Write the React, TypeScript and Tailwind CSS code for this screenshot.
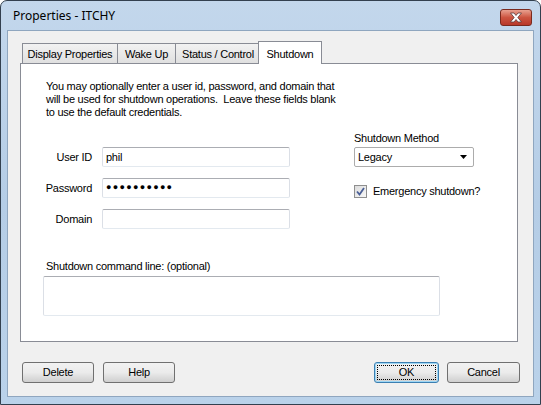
import React from 'react';

const ui = { fontFamily: '"Liberation Sans", Arial, sans-serif' };

function Tab({ label, width, active }: { label: string; width: string; active?: boolean }) {
  if (active) {
    return (
      <div
        className={`${width} h-[23px] -mb-[1px] -ml-[2px] relative z-10 bg-white border border-[#898c95] border-b-0 flex items-start justify-center pt-[4px] text-[11px] tracking-[-0.25px] text-black`}
      >
        {label}
      </div>
    );
  }
  return (
    <div
      className={`${width} h-[20px] bg-gradient-to-b from-[#f2f2f2] to-[#e0e0e0] border border-[#898c95] border-b-0 -mr-[1px] flex items-center justify-center pt-[1px] text-[11px] tracking-[-0.25px] text-black`}
    >
      {label}
    </div>
  );
}

function TextBox({ children, className = '' }: { children?: React.ReactNode; className?: string }) {
  return (
    <div
      className={`bg-white border border-t-[#abadb3] border-x-[#dbdfe6] border-b-[#e3e9ef] rounded-[2px] flex items-center px-[3px] text-[11px] ${className}`}
    >
      {children}
    </div>
  );
}

function Button({ label, focused, width }: { label: string; focused?: boolean; width: string }) {
  return (
    <div
      className={`${width} h-[21px] rounded-[3px] border ${
        focused ? 'border-[#3c7fb1] shadow-[inset_0_0_0_1px_#9ed7f5]' : 'border-[#707070]'
      } bg-gradient-to-b from-[#f2f2f2] via-[#ebebeb] to-[#cfcfcf] flex items-center justify-center p-[2px]`}
    >
      <div
        className={`w-full h-full flex items-center justify-center text-[11px] tracking-[-0.25px] text-black ${
          focused ? 'border border-dotted border-black' : ''
        }`}
      >
        {label}
      </div>
    </div>
  );
}

export default function App() {
  return (
    <div
      className="w-[541px] h-[405px] rounded-t-[7px] border border-[#33404f] bg-gradient-to-b from-[#c3d7ec] via-[#b5cde6] to-[#bad2ea] flex flex-col"
      style={ui}
    >
      {/* Title bar */}
      <div className="h-[29px] flex items-center justify-between pl-[12px] pr-[8px] pt-[1px]">
        <span className="text-[12px] text-black" style={{ fontFamily: '"Noto Sans", "Open Sans", sans-serif' }}>
          Properties - ITCHY
        </span>
        <div className="w-[32px] h-[17px] mt-[2px] rounded-[3px] border border-[#7a2a1e] bg-gradient-to-b from-[#e8a090] via-[#cc5440] to-[#b8382a] flex items-center justify-center">
          <svg width="14" height="11" viewBox="0 0 14 11">
            <path
              d="M1.5 1 L5 1 L7 3.5 L9 1 L12.5 1 L8.8 5.5 L12.5 10 L9 10 L7 7.5 L5 10 L1.5 10 L5.2 5.5 Z"
              fill="#ffffff"
              stroke="#5a3a3a"
              strokeWidth="0.8"
              strokeLinejoin="round"
            />
          </svg>
        </div>
      </div>

      {/* Client area */}
      <div className="flex-1 mx-[6px] mb-[7px] bg-[#f0f0f0] border border-[#8fa6bf] pl-[12px] pt-[11px] flex flex-col">
        {/* Tabs */}
        <div className="flex items-end h-[21px] pl-[2px]">
          <Tab label="Display Properties" width="w-[96px]" />
          <Tab label="Wake Up" width="w-[59px]" />
          <Tab label="Status / Control" width="w-[86px]" />
          <Tab label="Shutdown" width="w-[64px]" active />
        </div>

        {/* Panel */}
        <div className="w-[498px] h-[279px] bg-white border border-[#898c95] pl-[25px] pt-[16px] text-[11px] tracking-[-0.25px] text-black">
          <p className="leading-[13px] whitespace-pre">
            {'You may optionally enter a user id, password, and domain that\nwill be used for shutdown operations.  Leave these fields blank\nto use the default credentials.'}
          </p>

          <div className="flex mt-[11px]">
            <div className="grid grid-cols-[46px_188px] gap-x-[10px] gap-y-[11px] mt-[17px]">
              <span className="h-[20px] flex items-center justify-end">User ID</span>
              <TextBox className="h-[20px]">phil</TextBox>
              <span className="h-[20px] flex items-center justify-end">Password</span>
              <TextBox className="h-[20px]">
                <span className="text-[9px] tracking-[1.3px]">●●●●●●●●●●</span>
              </TextBox>
              <span className="h-[20px] flex items-center justify-end">Domain</span>
              <TextBox className="h-[20px]" />
            </div>

            <div className="ml-[64px] flex flex-col">
              <span className="h-[14px] leading-[14px] mt-[1px]">Shutdown Method</span>
              <div className="mt-[2px] w-[120px] h-[20px] bg-white border border-[#acacac] rounded-[2px] flex items-center justify-between pl-[3px] pr-[6px]">
                <span>Legacy</span>
                <svg width="7" height="4" viewBox="0 0 7 4">
                  <path d="M0 0 L7 0 L3.5 4 Z" fill="#000" />
                </svg>
              </div>
              <div className="flex items-center mt-[16px] gap-[6px]">
                <div className="w-[13px] h-[13px] border border-[#8f8f8f] bg-gradient-to-br from-[#dcdcdc] to-[#f8f8f8] flex items-center justify-center">
                  <svg width="9" height="9" viewBox="0 0 9 9">
                    <path d="M1 4.5 L3.5 7.5 L8 1" fill="none" stroke="#4a5f97" strokeWidth="1.8" />
                  </svg>
                </div>
                <span>Emergency shutdown?</span>
              </div>
            </div>
          </div>

          <p className="mt-[31px] leading-[13px]">Shutdown command line: (optional)</p>
          <div className="mt-[3px] -ml-[3px] w-[397px] h-[40px] bg-white border border-t-[#abadb3] border-x-[#dbdfe6] border-b-[#e3e9ef] rounded-[2px]" />
        </div>

        {/* Buttons */}
        <div className="flex items-center mt-[20px] pl-[2px] pr-[13px]">
          <Button label="Delete" width="w-[72px]" />
          <div className="w-[9px]" />
          <Button label="Help" width="w-[72px]" />
          <div className="flex-1" />
          <Button label="OK" focused width="w-[65px]" />
          <div className="w-[8px]" />
          <Button label="Cancel" width="w-[73px]" />
        </div>
      </div>
    </div>
  );
}
